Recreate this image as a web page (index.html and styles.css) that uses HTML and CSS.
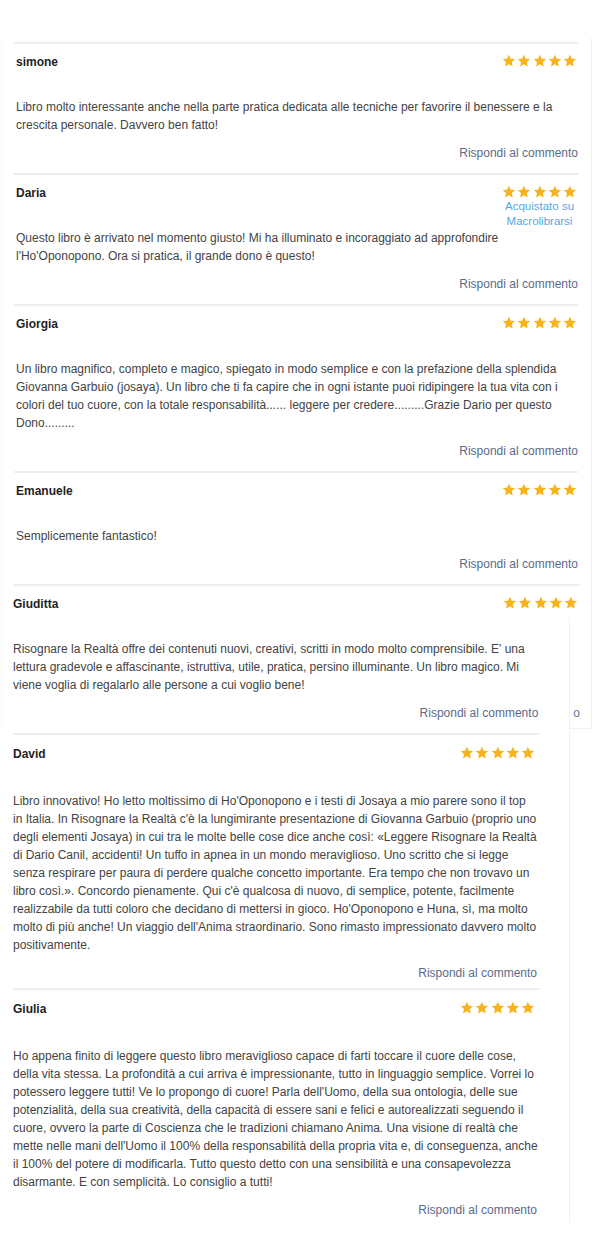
FILE: index.html
```html
<!DOCTYPE html>
<html lang="it">
<head>
<meta charset="utf-8">
<title>Commenti</title>
<link rel="stylesheet" href="styles.css">
</head>
<body>
<svg class="defs" aria-hidden="true">
  <symbol id="star" viewBox="0 0 24 24">
    <polygon points="12,1.2 15.2,8.1 22.8,8.9 17.1,14 18.7,21.6 12,17.7 5.3,21.6 6.9,14 1.2,8.9 8.8,8.1"/>
  </symbol>
</svg>
<div class="page">
  <div class="edges" aria-hidden="true">
    <span class="edge edge-wide-left"></span>
    <span class="edge edge-wide-right"></span>
    <span class="edge edge-wide-bottom"></span>
    <span class="edge edge-narrow-right"></span>
  </div>
  <ul class="reviews">
    <li class="review review--wide">
      <div class="review-head">
        <span class="author">simone</span>
        <div class="rating">
          <div class="stars"><svg class="star"><use href="#star"/></svg><svg class="star"><use href="#star"/></svg><svg class="star"><use href="#star"/></svg><svg class="star"><use href="#star"/></svg><svg class="star"><use href="#star"/></svg></div>
        </div>
      </div>
      <p class="review-text">Libro molto interessante anche nella parte pratica dedicata alle tecniche per favorire il benessere e la crescita personale. Davvero ben fatto!</p>
      <div class="review-foot"><a class="reply" href="#">Rispondi al commento</a></div>
    </li>
    <li class="review review--wide">
      <div class="review-head">
        <span class="author">Daria</span>
        <div class="rating">
          <div class="stars"><svg class="star"><use href="#star"/></svg><svg class="star"><use href="#star"/></svg><svg class="star"><use href="#star"/></svg><svg class="star"><use href="#star"/></svg><svg class="star"><use href="#star"/></svg></div>
          <div class="purchased">Acquistato su<br>Macrolibrarsi</div>
        </div>
      </div>
      <p class="review-text">Questo libro è arrivato nel momento giusto! Mi ha illuminato e incoraggiato ad approfondire l'Ho'Oponopono. Ora si pratica, il grande dono è questo!</p>
      <div class="review-foot"><a class="reply" href="#">Rispondi al commento</a></div>
    </li>
    <li class="review review--wide">
      <div class="review-head">
        <span class="author">Giorgia</span>
        <div class="rating">
          <div class="stars"><svg class="star"><use href="#star"/></svg><svg class="star"><use href="#star"/></svg><svg class="star"><use href="#star"/></svg><svg class="star"><use href="#star"/></svg><svg class="star"><use href="#star"/></svg></div>
        </div>
      </div>
      <p class="review-text">Un libro magnifico, completo e magico, spiegato in modo semplice e con la prefazione della splendida Giovanna Garbuio (josaya). Un libro che ti fa capire che in ogni istante puoi ridipingere la tua vita con i colori del tuo cuore, con la totale responsabilità...... leggere per credere.........Grazie Dario per questo Dono.........</p>
      <div class="review-foot"><a class="reply" href="#">Rispondi al commento</a></div>
    </li>
    <li class="review review--wide">
      <div class="review-head">
        <span class="author">Emanuele</span>
        <div class="rating">
          <div class="stars"><svg class="star"><use href="#star"/></svg><svg class="star"><use href="#star"/></svg><svg class="star"><use href="#star"/></svg><svg class="star"><use href="#star"/></svg><svg class="star"><use href="#star"/></svg></div>
        </div>
      </div>
      <p class="review-text">Semplicemente fantastico!</p>
      <div class="review-foot"><a class="reply" href="#">Rispondi al commento</a></div>
    </li>
    <li class="review review--split">
      <div class="review-head">
        <span class="author">Giuditta</span>
        <div class="rating">
          <div class="stars"><svg class="star"><use href="#star"/></svg><svg class="star"><use href="#star"/></svg><svg class="star"><use href="#star"/></svg><svg class="star"><use href="#star"/></svg><svg class="star"><use href="#star"/></svg></div>
        </div>
      </div>
      <p class="review-text">Risognare la Realtà offre dei contenuti nuovi, creativi, scritti in modo molto comprensibile. E' una lettura gradevole e affascinante, istruttiva, utile, pratica, persino illuminante. Un libro magico. Mi viene voglia di regalarlo alle persone a cui voglio bene!</p>
      <div class="review-foot"><a class="reply" href="#">Rispondi al commento</a><span class="reply-ghost">o</span></div>
    </li>
    <li class="review review--narrow">
      <div class="review-head">
        <span class="author">David</span>
        <div class="rating">
          <div class="stars"><svg class="star"><use href="#star"/></svg><svg class="star"><use href="#star"/></svg><svg class="star"><use href="#star"/></svg><svg class="star"><use href="#star"/></svg><svg class="star"><use href="#star"/></svg></div>
        </div>
      </div>
      <p class="review-text review-text--set">Libro innovativo! Ho letto moltissimo di Ho'Oponopono e i testi di Josaya a mio parere sono il top<br>in Italia. In Risognare la Realtà c'è la lungimirante presentazione di Giovanna Garbuio (proprio uno<br>degli elementi Josaya) in cui tra le molte belle cose dice anche così: «Leggere Risognare la Realtà<br>di Dario Canil, accidenti! Un tuffo in apnea in un mondo meraviglioso. Uno scritto che si legge<br>senza respirare per paura di perdere qualche concetto importante. Era tempo che non trovavo un<br>libro così.». Concordo pienamente. Qui c'è qualcosa di nuovo, di semplice, potente, facilmente<br>realizzabile da tutti coloro che decidano di mettersi in gioco. Ho'Oponopono e Huna, sì, ma molto<br>molto di più anche! Un viaggio dell'Anima straordinario. Sono rimasto impressionato davvero molto<br>positivamente.</p>
      <div class="review-foot"><a class="reply" href="#">Rispondi al commento</a></div>
    </li>
    <li class="review review--narrow review--last">
      <div class="review-head">
        <span class="author">Giulia</span>
        <div class="rating">
          <div class="stars"><svg class="star"><use href="#star"/></svg><svg class="star"><use href="#star"/></svg><svg class="star"><use href="#star"/></svg><svg class="star"><use href="#star"/></svg><svg class="star"><use href="#star"/></svg></div>
        </div>
      </div>
      <p class="review-text">Ho appena finito di leggere questo libro meraviglioso capace di farti toccare il cuore delle cose, della vita stessa. La profondità a cui arriva è impressionante, tutto in linguaggio semplice. Vorrei lo potessero leggere tutti! Ve lo propongo di cuore! Parla dell'Uomo, della sua ontologia, delle sue potenzialità, della sua creatività, della capacità di essere sani e felici e autorealizzati seguendo il cuore, ovvero la parte di Coscienza che le tradizioni chiamano Anima. Una visione di realtà che mette nelle mani dell'Uomo il 100% della responsabilità della propria vita e, di conseguenza, anche il 100% del potere di modificarla. Tutto questo detto con una sensibilità e una consapevolezza disarmante. E con semplicità. Lo consiglio a tutti!</p>
      <div class="review-foot"><a class="reply" href="#">Rispondi al commento</a></div>
    </li>
  </ul>
</div>
</body>
</html>
```
FILE: styles.css
```css
html, body {
  margin: 0;
  padding: 0;
  background: #ffffff;
}

body {
  font-family: "Liberation Sans", Arial, sans-serif;
  font-size: 12px;
  color: #434343;
}

.defs {
  width: 0;
  height: 0;
  position: absolute;
  overflow: hidden;
}

.page {
  position: relative;
  height: 1256px;
  padding-top: 42px;
  box-sizing: border-box;
  overflow: hidden;
}

/* faint frames left by the stitched screenshots */
.edges {
  position: absolute;
  inset: 0;
  pointer-events: none;
}

.edge {
  position: absolute;
  background: #f1f1f1;
}

.edge-wide-left {
  left: 1px;
  top: 40px;
  width: 1px;
  height: 688px;
  background: #f7f7f7;
}

.edge-wide-right {
  left: 591px;
  top: 38px;
  width: 1px;
  height: 690px;
}

.edge-wide-bottom {
  left: 570px;
  top: 728px;
  width: 22px;
  height: 1px;
}

.edge-narrow-right {
  left: 569px;
  top: 618px;
  width: 1px;
  height: 605px;
}

.reviews {
  list-style: none;
  margin: 0;
  padding: 0;
}

.review {
  border-top: 2px solid #eeeeee;
  box-sizing: border-box;
}

.review-head {
  display: flex;
  justify-content: space-between;
  align-items: flex-start;
  min-height: 45px;
}

.author {
  font-weight: bold;
  color: #1f1f1f;
  line-height: 18px;
}

.rating {
  display: flex;
  flex-direction: column;
  align-items: center;
  padding-top: 1px;
}

.stars {
  display: flex;
  gap: 1.5px;
  height: 14px;
  align-items: center;
}

.star {
  width: 13.8px;
  height: 13.8px;
  fill: #f6b31a;
}

.purchased {
  font-size: 11.5px;
  line-height: 14.5px;
  color: #5aa6df;
  text-align: center;
}

.review-text {
  margin: 0;
  line-height: 18px;
}

.review-text--set {
  white-space: nowrap;
}

.review-foot {
  display: flex;
  justify-content: flex-end;
  align-items: baseline;
  margin-top: 10px;
  line-height: 18px;
}

.reply {
  color: #5b6a89;
  text-decoration: none;
}

.reply-ghost {
  color: #6b7894;
  margin-left: 35px;
}

/* wide screenshot */
.review--wide {
  margin-left: 14px;
  width: 564px;
  padding: 9px 0 11px;
}

.review--wide .author,
.review--wide .review-text {
  padding-left: 2px;
}

.review--wide .rating {
  margin-right: 1px;
}

/* header from wide, body from narrow */
.review--split {
  margin-left: 13px;
  width: 567px;
  padding: 9px 0 11px;
}

.review--split .rating {
  margin-right: 2px;
}

.review--split .review-text {
  width: 529px;
}

/* narrow screenshot */
.review--narrow {
  margin-left: 13px;
  width: 527px;
  padding: 10px 0 6px;
}

.review--narrow .review-head {
  min-height: 47px;
}

.review--narrow .rating {
  margin-right: 5px;
}

.review--narrow .review-text {
  margin-right: -2px;
}

.review--narrow .review-foot {
  padding-right: 3px;
}

.review--last {
  padding-bottom: 0;
}
```
